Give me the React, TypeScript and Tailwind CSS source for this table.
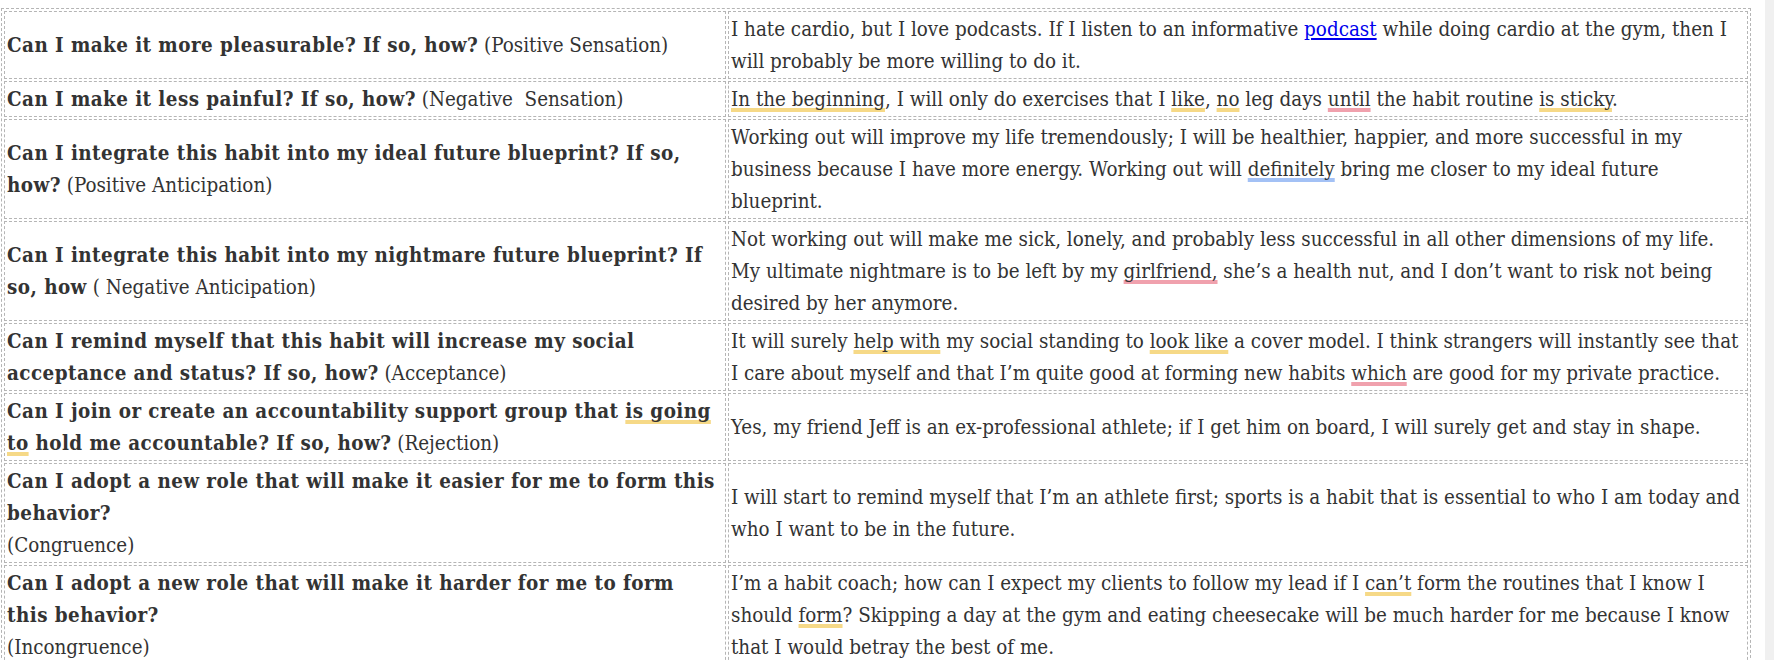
import React from "react";

type Tone = "y" | "p" | "b";

function Mark({ tone, children }: { tone: Tone; children: React.ReactNode }) {
  const cls =
    tone === "y"
      ? "decoration-[#f6d987]"
      : tone === "p"
      ? "decoration-[#f0a1ad]"
      : "decoration-[#a3c1f5]";
  return (
    <span
      className={`underline [text-decoration-thickness:4px] [text-underline-offset:2px] [text-decoration-skip-ink:none] ${cls}`}
    >
      {children}
    </span>
  );
}

function Q({ children }: { children: React.ReactNode }) {
  return <strong className="font-bold tracking-[0.45px]">{children}</strong>;
}

function Cell({ children, left }: { children: React.ReactNode; left?: boolean }) {
  return (
    <td
      className={`border border-dashed border-[#b5b5b5] px-[2px] py-[1px] align-middle whitespace-nowrap overflow-hidden ${
        left ? "w-[722px]" : ""
      }`}
    >
      {children}
    </td>
  );
}

export default function App() {
  return (
    <div className="flex h-[660px] w-[1774px] overflow-hidden bg-white">
      <div className="flex-1 pt-[8px] pl-[1px]">
        <table className="w-[1750px] table-fixed border-separate border-spacing-[2px] border border-dashed border-[#b5b5b5] font-['DejaVu_Serif_Condensed','DejaVu_Serif',serif] text-[20.4px] leading-[32px] text-[#333333]">
          <tbody>
            <tr>
              <Cell left>
                <Q>Can I make it more pleasurable? If so, how?</Q> (Positive Sensation)
              </Cell>
              <Cell>
                I hate cardio, but I love podcasts. If I listen to an informative{" "}
                <a href="#" className="text-[#0000ee] underline underline-offset-[2px]">
                  podcast
                </a>{" "}
                while doing cardio at the gym, then I
                <br />
                will probably be more willing to do it.
              </Cell>
            </tr>
            <tr>
              <Cell left>
                <Q>Can I make it less painful? If so, how?</Q> (Negative{"\u00a0"} Sensation)
              </Cell>
              <Cell>
                <Mark tone="y">In the beginning</Mark>, I will only do exercises that I{" "}
                <Mark tone="y">like</Mark>, <Mark tone="y">no</Mark> leg days{" "}
                <Mark tone="p">until</Mark> the habit routine <Mark tone="y">is sticky</Mark>.
              </Cell>
            </tr>
            <tr>
              <Cell left>
                <Q>Can I integrate this habit into my ideal future blueprint? If so,</Q>
                <br />
                <Q>how?</Q> (Positive Anticipation)
              </Cell>
              <Cell>
                Working out will improve my life tremendously; I will be healthier, happier, and more
                successful in my
                <br />
                business because I have more energy. Working out will{" "}
                <Mark tone="b">definitely</Mark> bring me closer to my ideal future
                <br />
                blueprint.
              </Cell>
            </tr>
            <tr>
              <Cell left>
                <Q>Can I integrate this habit into my nightmare future blueprint? If</Q>
                <br />
                <Q>so, how</Q> ( Negative Anticipation)
              </Cell>
              <Cell>
                Not working out will make me sick, lonely, and probably less successful in all other
                dimensions of my life.
                <br />
                My ultimate nightmare is to be left by my <Mark tone="p">girlfriend,</Mark> she’s a
                health nut, and I don’t want to risk not being
                <br />
                desired by her anymore.
              </Cell>
            </tr>
            <tr>
              <Cell left>
                <Q>Can I remind myself that this habit will increase my social</Q>
                <br />
                <Q>acceptance and status? If so, how?</Q> (Acceptance)
              </Cell>
              <Cell>
                It will surely <Mark tone="y">help with</Mark> my social standing to{" "}
                <Mark tone="y">look like</Mark> a cover model. I think strangers will instantly see
                that
                <br />I care about myself and that I’m quite good at forming new habits{" "}
                <Mark tone="p">which</Mark> are good for my private practice.
              </Cell>
            </tr>
            <tr>
              <Cell left>
                <Q>
                  Can I join or create an accountability support group that{" "}
                  <Mark tone="y">is going</Mark>
                  <br />
                  <Mark tone="y">to</Mark> hold me accountable? If so, how?
                </Q>{" "}
                (Rejection)
              </Cell>
              <Cell>
                Yes, my friend Jeff is an ex-professional athlete; if I get him on board, I will surely
                get and stay in shape.
              </Cell>
            </tr>
            <tr>
              <Cell left>
                <Q>Can I adopt a new role that will make it easier for me to form this</Q>
                <br />
                <Q>behavior?</Q>
                <br />
                (Congruence)
              </Cell>
              <Cell>
                I will start to remind myself that I’m an athlete first; sports is a habit that is
                essential to who I am today and
                <br />
                who I want to be in the future.
              </Cell>
            </tr>
            <tr>
              <Cell left>
                <Q>Can I adopt a new role that will make it harder for me to form</Q>
                <br />
                <Q>this behavior?</Q>
                <br />
                (Incongruence)
              </Cell>
              <Cell>
                I’m a habit coach; how can I expect my clients to follow my lead if I{" "}
                <Mark tone="y">can’t</Mark> form the routines that I know I
                <br />
                should <Mark tone="y">form</Mark>? Skipping a day at the gym and eating cheesecake will
                be much harder for me because I know
                <br />
                that I would betray the best of me.
              </Cell>
            </tr>
          </tbody>
        </table>
      </div>
      <div className="h-full w-[9px] shrink-0 bg-[#f0f0f0]" />
    </div>
  );
}
